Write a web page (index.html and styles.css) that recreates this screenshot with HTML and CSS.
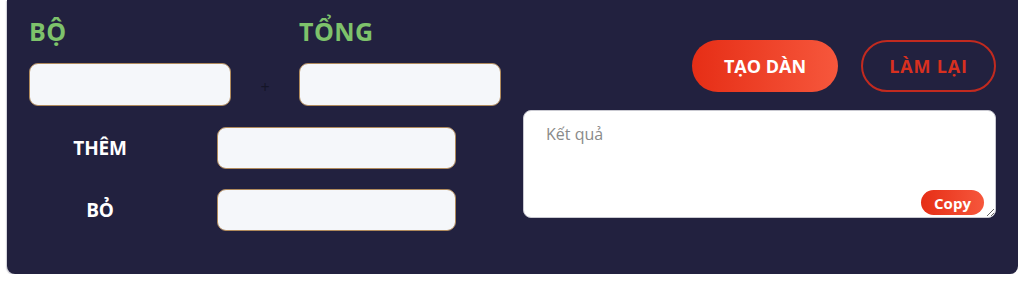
FILE: index.html
```html
<!DOCTYPE html>
<html lang="vi">
<head>
<meta charset="utf-8">
<link rel="stylesheet" href="styles.css">
</head>
<body>
<div class="panel">
  <div class="left">
    <div class="titles">
      <div class="title">BỘ</div>
      <div class="title">TỔNG</div>
    </div>
    <div class="pair">
      <input class="field" type="text">
      <span class="plus">+</span>
      <input class="field" type="text">
    </div>
    <div class="extra">
      <div class="label">THÊM</div>
      <input class="field wide" type="text">
      <div class="label">BỎ</div>
      <input class="field wide" type="text">
    </div>
  </div>
  <div class="right">
    <div class="actions">
      <button class="btn primary">TẠO DÀN</button>
      <button class="btn outline">LÀM LẠI</button>
    </div>
    <div class="result">
      <textarea class="output" placeholder="Kết quả"></textarea>
      <button class="copy">Copy</button>
    </div>
  </div>
</div>
</body>
</html>
```

FILE: styles.css
```css
* { box-sizing: border-box; }
html, body { margin: 0; padding: 0; background: #ffffff; }
body { font-family: "Open Sans", "Noto Sans", sans-serif; }

.panel {
  margin: 0 6px 0 7px;
  height: 274px;
  background: #22213f;
  border-radius: 0 0 8px 8px;
  box-shadow: -1px 1px 1px rgba(120,120,140,0.35);
  display: flex;
  gap: 22px;
  padding: 14px 22px 0 22px;
}

.left { width: 472px; }

.titles {
  display: grid;
  grid-template-columns: 270px 1fr;
  height: 34px;
}
.title {
  color: #7ec26b;
  font-weight: 700;
  font-size: 25px;
  line-height: 34px;
  letter-spacing: 0.4px;
}

.field {
  display: block;
  height: 43px;
  background: #f5f7fa;
  border: 1.5px solid #b08a5c;
  border-radius: 9px;
  outline: none;
}

.pair {
  margin-top: 15px;
  display: grid;
  grid-template-columns: 202px 68px 202px;
  align-items: center;
}
.plus {
  text-align: center;
  color: #151528;
  font-size: 16px;
  line-height: 1;
  padding-top: 4px;
}

.extra {
  margin-top: 21px;
  display: grid;
  grid-template-columns: 142px 239px;
  column-gap: 46px;
  row-gap: 20px;
  align-items: center;
}
.extra .field { height: 42px; }
.label {
  color: #ffffff;
  font-weight: 700;
  font-size: 19px;
  text-align: center;
  letter-spacing: -0.2px;
}

.right { width: 473px; }

.actions {
  margin-top: 26px;
  display: flex;
  justify-content: flex-end;
  gap: 23px;
}
.btn {
  height: 52px;
  border-radius: 26px;
  font-family: "Open Sans", "Noto Sans", sans-serif;
  font-weight: 700;
  font-size: 18px;
  cursor: pointer;
  padding: 0;
}
.primary {
  width: 146px;
  border: none;
  color: #ffffff;
  background: linear-gradient(90deg, #e62e16 0%, #f6573c 100%);
}
.outline {
  width: 135px;
  background: transparent;
  border: 2px solid #c22a1f;
  color: #d8301f;
  letter-spacing: 0.8px;
}

.result {
  position: relative;
  margin-top: 18px;
  height: 108px;
}
.output {
  display: block;
  width: 100%;
  height: 108px;
  background: #ffffff;
  border: 1px solid #c9c9d1;
  border-radius: 8px;
  padding: 12px 22px;
  font-family: "Open Sans", "Noto Sans", sans-serif;
  font-size: 16px;
  color: #333;
  outline: none;
}
.output::placeholder { color: #8a8a8a; }

.copy {
  position: absolute;
  right: 12px;
  bottom: 3px;
  width: 63px;
  height: 25px;
  border: none;
  border-radius: 13px;
  background: linear-gradient(90deg, #e62e16 0%, #f6573c 100%);
  color: #ffffff;
  font-family: "Open Sans", "Noto Sans", sans-serif;
  font-weight: 700;
  font-size: 15px;
  padding: 0;
}
```
